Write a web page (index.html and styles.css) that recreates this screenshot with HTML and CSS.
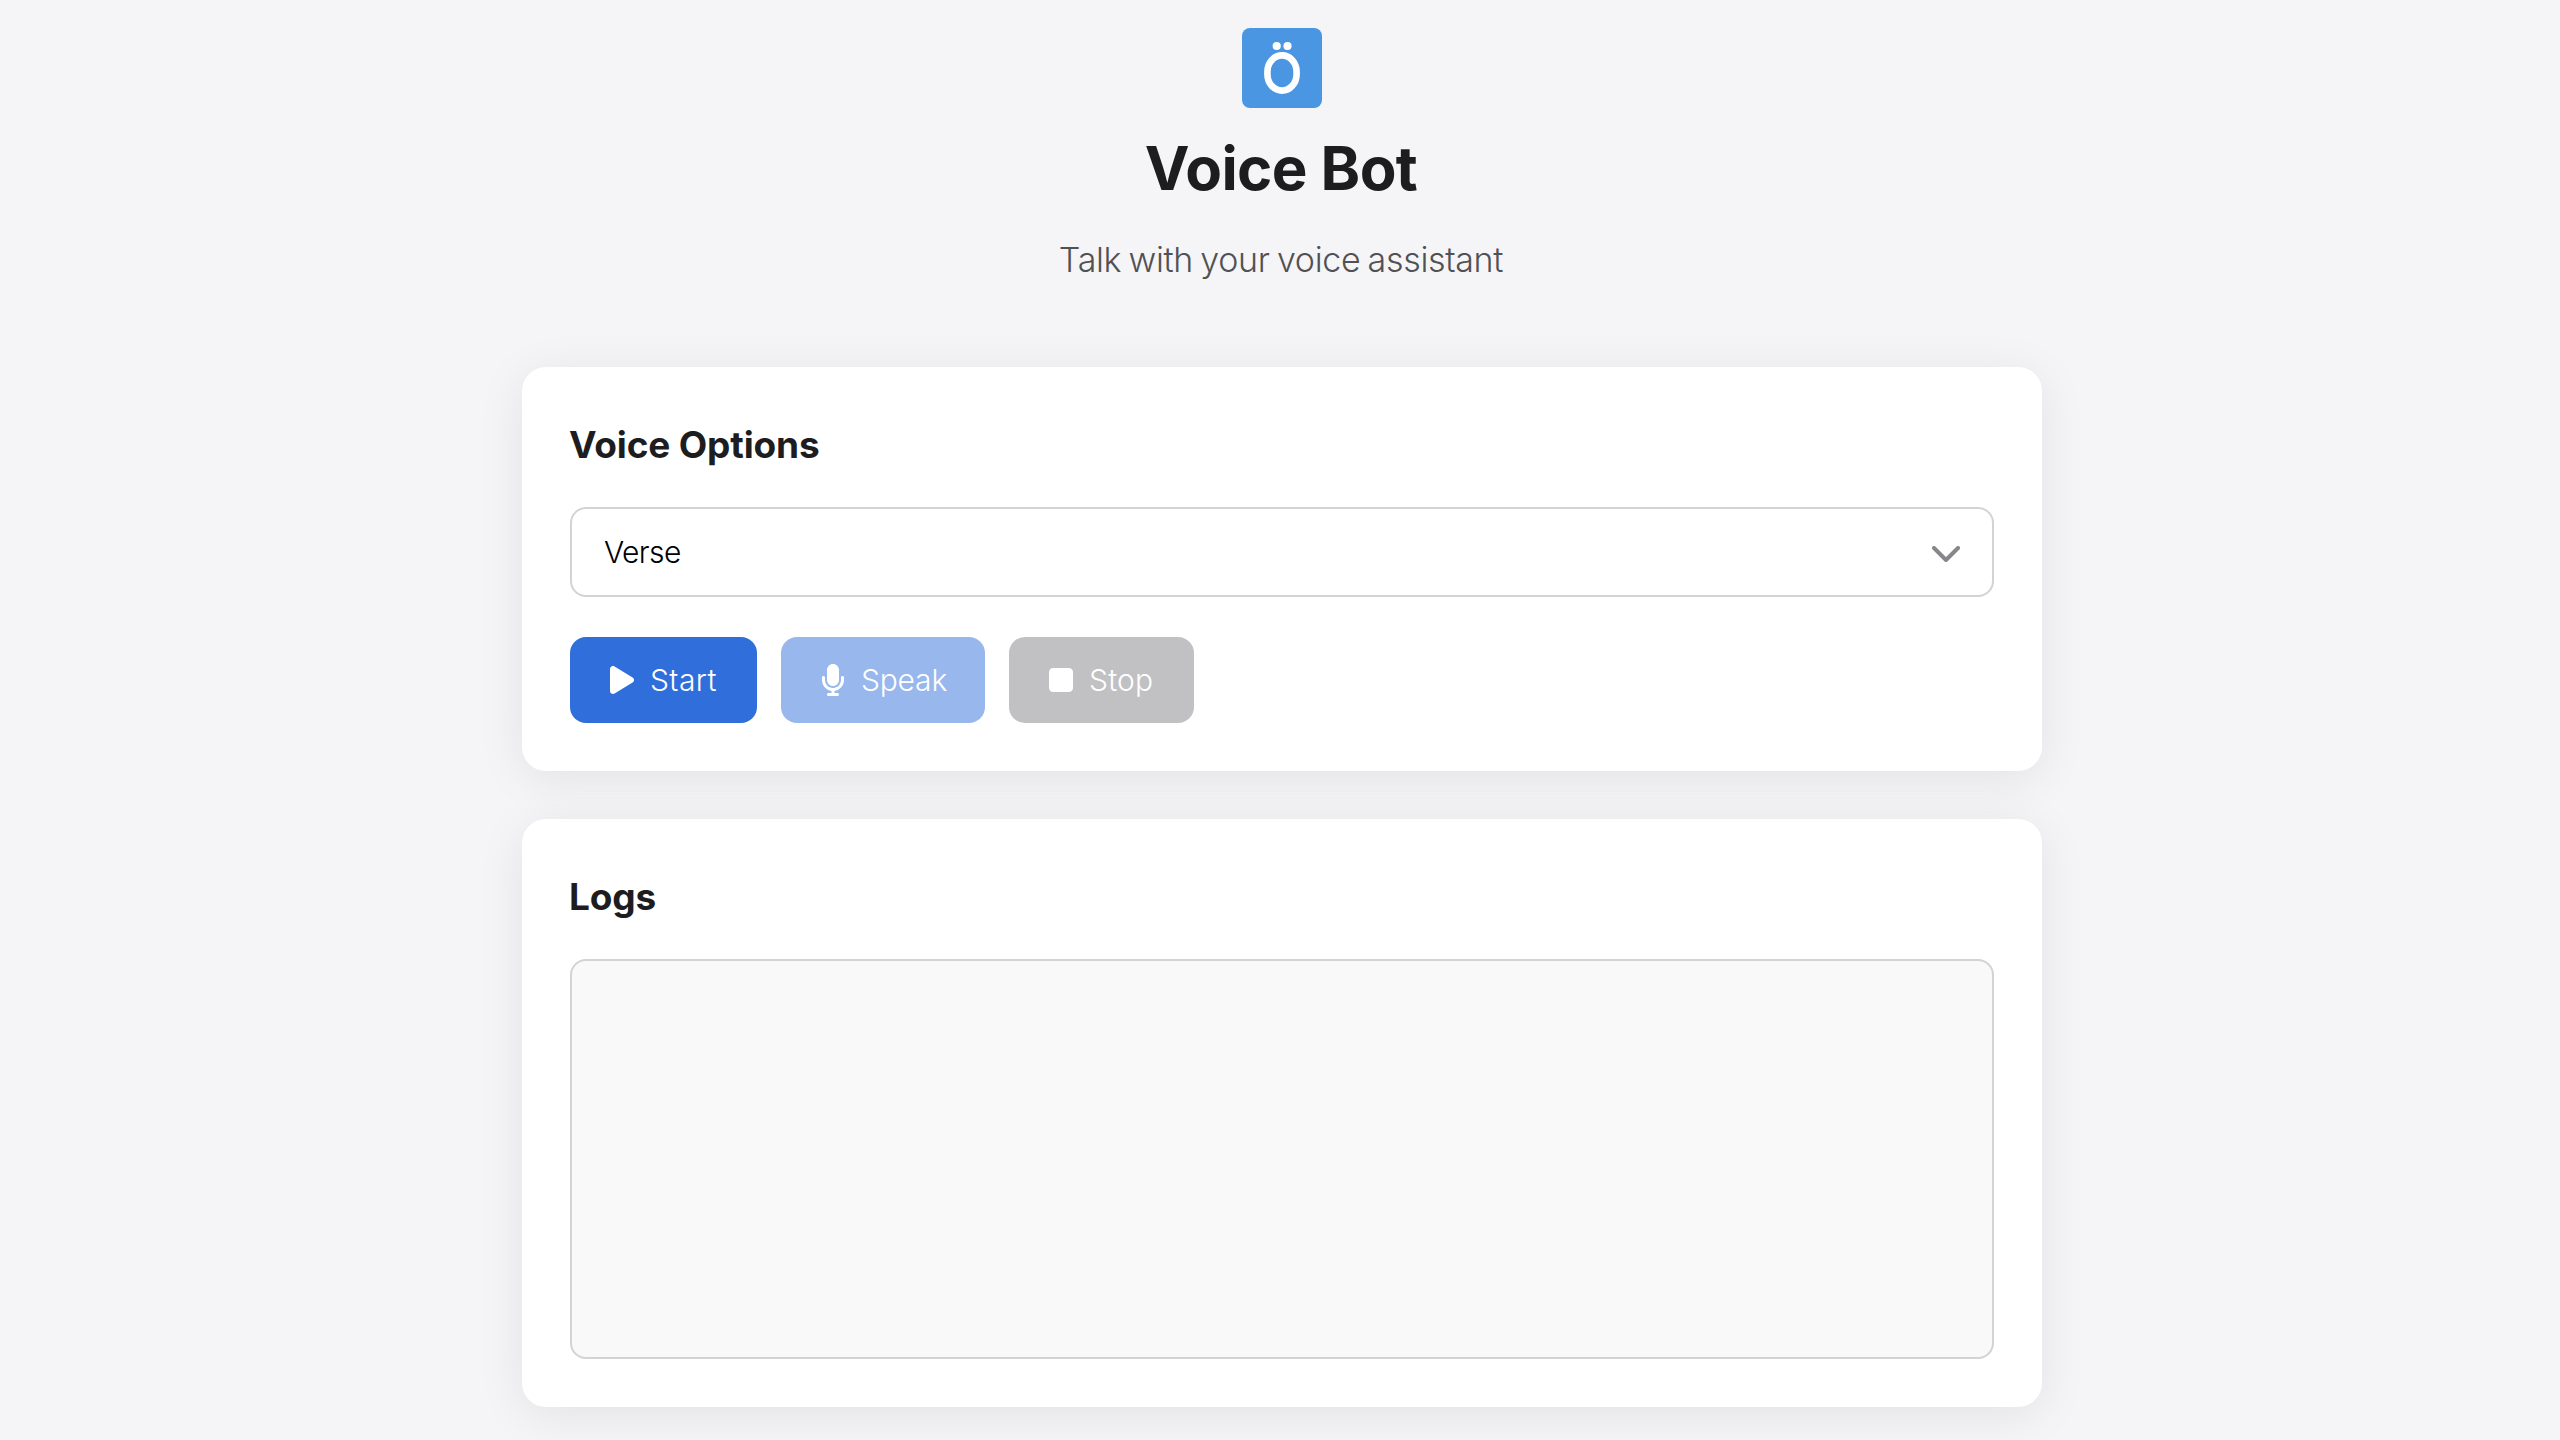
FILE: index.html
```html
<!DOCTYPE html>
<html lang="en">
<head>
<meta charset="utf-8">
<title>Voice Bot</title>
<link rel="stylesheet" href="styles.css">
</head>
<body>
<main class="page">
  <header class="header">
    <svg class="logo" viewBox="0 0 80 80" aria-hidden="true">
      <rect width="80" height="80" rx="8" fill="#4a96e3"/>
      <circle cx="34.7" cy="18" r="4.1" fill="#fff"/>
      <circle cx="45.5" cy="18" r="4.1" fill="#fff"/>
      <rect x="25.4" y="27.4" width="29.2" height="35.2" rx="14.6" ry="16.4" fill="none" stroke="#fff" stroke-width="6.6"/>
    </svg>
    <h1 class="title">Voice Bot</h1>
    <p class="subtitle">Talk with your voice assistant</p>
  </header>
  <section class="card">
    <h2 class="heading">Voice Options</h2>
    <div class="select">
      <span class="value">Verse</span>
      <svg class="chevron" viewBox="0 0 28 16" aria-hidden="true"><path d="M2 2l12 12L26 2" fill="none" stroke="#86868b" stroke-width="4" stroke-linecap="round" stroke-linejoin="round"/></svg>
    </div>
    <div class="actions">
      <button class="button start"><svg class="icon" viewBox="0 0 384 512"><path d="M73 39c-14.8-9.100-33.400-9.400-48.500-.9S0 62.600 0 80v352c0 17.400 9.400 33.400 24.500 41.900s33.700 8.100 48.500-.9l288-176c14.300-8.700 23-24.200 23-41s-8.700-32.200-23-41L73 39z"/></svg><span>Start</span></button>
      <button class="button speak"><svg class="icon" viewBox="0 0 384 512"><path d="M192 0c-53 0-96 43-96 96v160c0 53 43 96 96 96s96-43 96-96V96c0-53-43-96-96-96zM64 216c0-13.300-10.700-24-24-24s-24 10.700-24 24v40c0 89.100 66.200 162.700 152 174.400V464h-48c-13.300 0-24 10.700-24 24s10.700 24 24 24h144c13.300 0 24-10.700 24-24s-10.700-24-24-24h-48v-33.600c85.800-11.700 152-85.300 152-174.400v-40c0-13.300-10.700-24-24-24s-24 10.700-24 24v40c0 70.700-57.300 128-128 128S64 326.700 64 256v-40z"/></svg><span>Speak</span></button>
      <button class="button stop"><svg class="icon" viewBox="0 0 384 512"><path d="M64 64h256c35.300 0 64 28.700 64 64v256c0 35.300-28.700 64-64 64H64c-35.300 0-64-28.700-64-64V128c0-35.300 28.700-64 64-64z"/></svg><span>Stop</span></button>
    </div>
  </section>
  <section class="card">
    <h2 class="heading">Logs</h2>
    <div class="logs"></div>
  </section>
</main>
</body>
</html>
```
FILE: styles.css
```css
* { box-sizing: border-box; }
body {
  margin: 0;
  height: 1440px;
  overflow: hidden;
  background: #f5f5f7;
  color: #1d1d1f;
  font-family: Inter, "Liberation Sans", sans-serif;
}
.page {
  display: flex;
  flex-direction: column;
  gap: 48px;
  width: 1520px;
  margin-left: 522px;
  padding-top: 28px;
}
.header {
  display: flex;
  flex-direction: column;
  align-items: center;
  height: 291px;
}
.logo { width: 80px; height: 80px; }
.title {
  margin: 20px 2px 0 0;
  font-size: 60px;
  line-height: 80px;
  font-weight: 700;
  letter-spacing: -0.6px;
}
.subtitle {
  margin: 26px 2px 0 0;
  font-size: 34px;
  line-height: 52px;
  font-weight: 350;
  letter-spacing: -0.32px;
  word-spacing: -2px;
  color: #515154;
}
.card {
  padding: 48px;
  border-radius: 24px;
  background: #fff;
  box-shadow: 0 8px 48px rgba(0, 0, 0, 0.08);
}
.heading {
  margin: 6px 0 38px -1px;
  font-size: 37px;
  line-height: 48px;
  font-weight: 700;
  letter-spacing: -0.15px;
}
.select {
  display: flex;
  align-items: center;
  justify-content: space-between;
  height: 90px;
  padding: 0 32px;
  border: 2px solid #d2d2d7;
  border-radius: 16px;
}
.value { font-size: 30px; font-weight: 350; letter-spacing: -0.6px; color: #000; }
.chevron { width: 28px; height: 16px; margin-top: 4px; }
.actions { display: flex; gap: 24px; margin-top: 40px; }
.button {
  display: flex;
  align-items: center;
  gap: 16px;
  height: 86px;
  padding: 0 0 0 40px;
  border: 0;
  border-radius: 16px;
  color: #fff;
  font: 300 30px Inter, "Liberation Sans", sans-serif;
  letter-spacing: 0.4px;
}
.icon { flex: none; width: 24px; height: 32px; fill: currentColor; }
.start { width: 187px; background: #306fdb; }
.speak { width: 204px; background: #98b7ed; letter-spacing: -0.2px; }
.stop { width: 185px; background: #c1c1c3; letter-spacing: 0.2px; }
.logs {
  height: 400px;
  border: 2px solid #d2d2d7;
  border-radius: 16px;
  background: #f9f9f9;
}
```
